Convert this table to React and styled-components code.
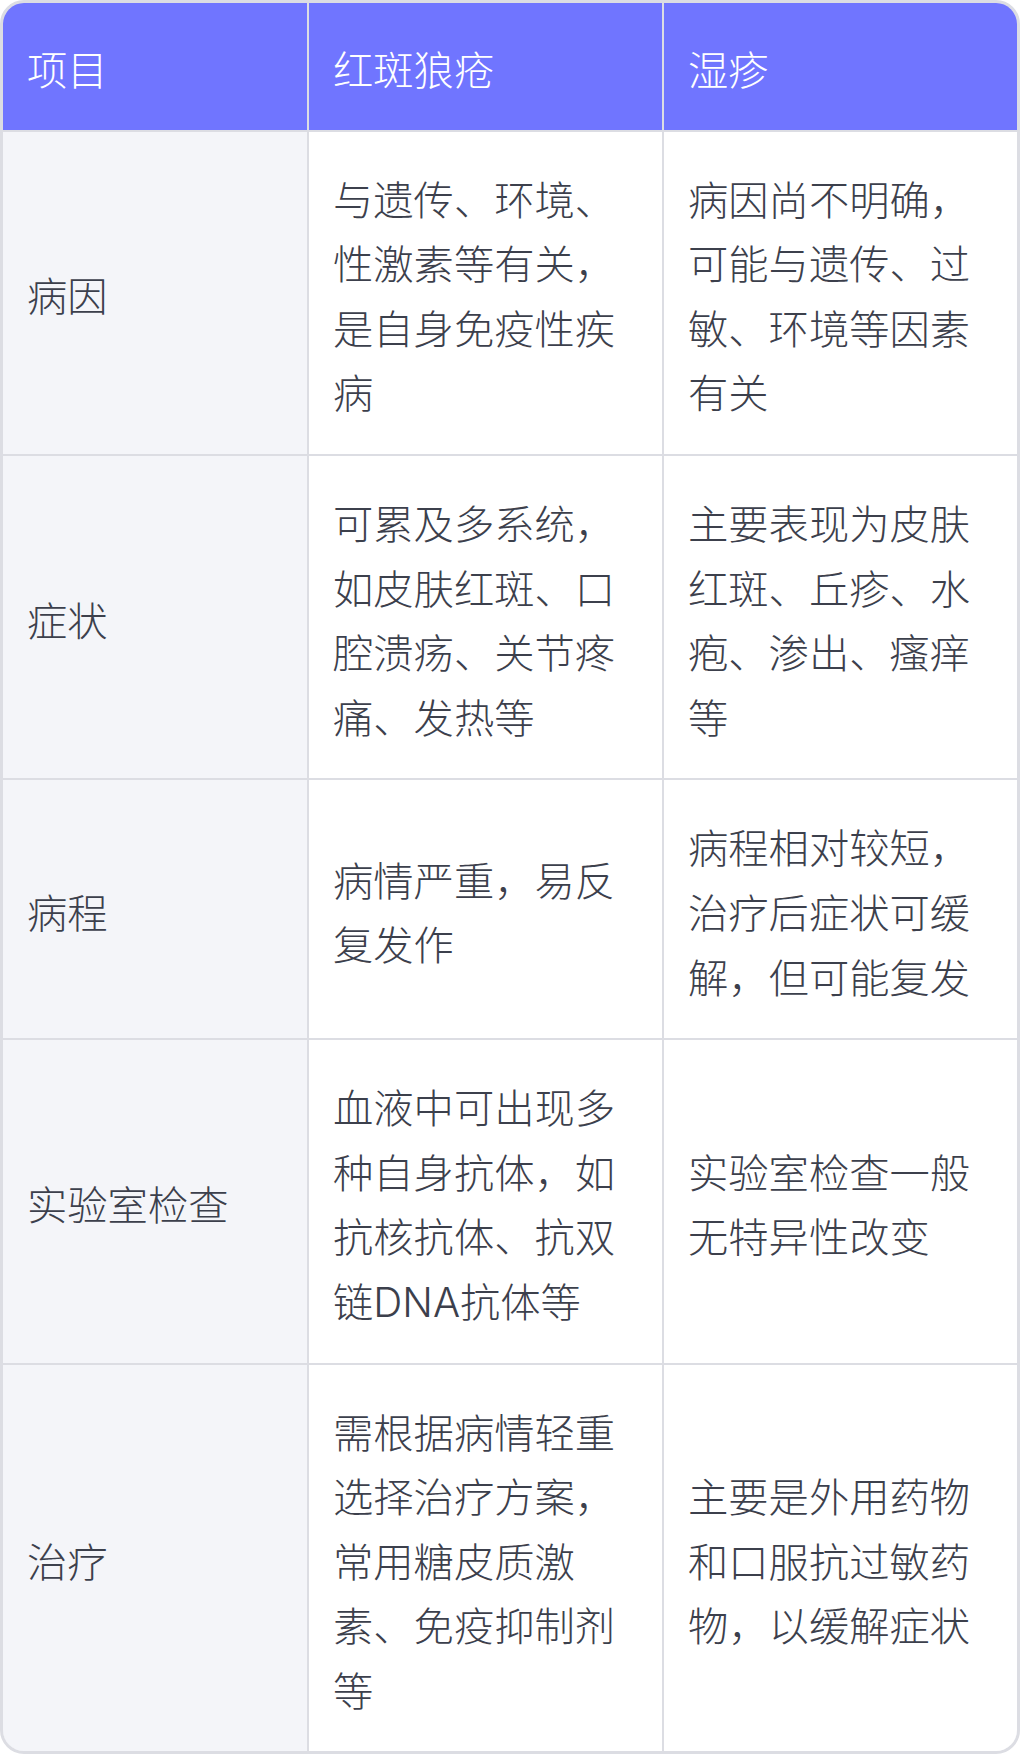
import styled, { createGlobalStyle } from "styled-components";

const GlobalStyle = createGlobalStyle`
  body {
    margin: 0;
    background: #ffffff;
    font-family: Inter, "Noto Sans CJK SC", sans-serif;
  }
`;

const Frame = styled.div`
  width: 1020px;
  box-sizing: border-box;
  border: 3px solid #dcdde3;
  border-radius: 24px;
  overflow: hidden;
`;

const Grid = styled.div`
  display: grid;
  grid-template-columns: 304px 353px 353px;
  gap: 2px;
  background: #dcdde3;
`;

const Cell = styled.div`
  display: flex;
  align-items: center;
  box-sizing: border-box;
  padding: ${(p) => (p.$head ? "36px 24px 26px" : "37px 24px 27px")};
  font-size: 40.3px;
  font-weight: 300;
  line-height: 64.6px;
  background: ${(p) => (p.$head ? "#7075ff" : p.$label ? "#f4f5f9" : "#ffffff")};
  color: ${(p) => (p.$head ? "#ffffff" : "#3c404c")};
`;

const rows = [
  [
    "病因",
    "与遗传、环境、性激素等有关，是自身免疫性疾病",
    "病因尚不明确，可能与遗传、过敏、环境等因素有关",
  ],
  [
    "症状",
    "可累及多系统，如皮肤红斑、口腔溃疡、关节疼痛、发热等",
    "主要表现为皮肤红斑、丘疹、水疱、渗出、瘙痒等",
  ],
  ["病程", "病情严重，易反复发作", "病程相对较短，治疗后症状可缓解，但可能复发"],
  [
    "实验室检查",
    "血液中可出现多种自身抗体，如抗核抗体、抗双链DNA抗体等",
    "实验室检查一般无特异性改变",
  ],
  [
    "治疗",
    "需根据病情轻重选择治疗方案，常用糖皮质激素、免疫抑制剂等",
    "主要是外用药物和口服抗过敏药物，以缓解症状",
  ],
];

const App = () => {
  return (
    <>
      <GlobalStyle />
      <Frame>
        <Grid>
          <Cell $head>项目</Cell>
          <Cell $head>红斑狼疮</Cell>
          <Cell $head>湿疹</Cell>
          {rows.map((r) => (
            <>
              <Cell key={r[0]} $label>{r[0]}</Cell>
              <Cell key={r[0] + "a"}>{r[1]}</Cell>
              <Cell key={r[0] + "b"}>{r[2]}</Cell>
            </>
          ))}
        </Grid>
      </Frame>
    </>
  );
};

export default App;
